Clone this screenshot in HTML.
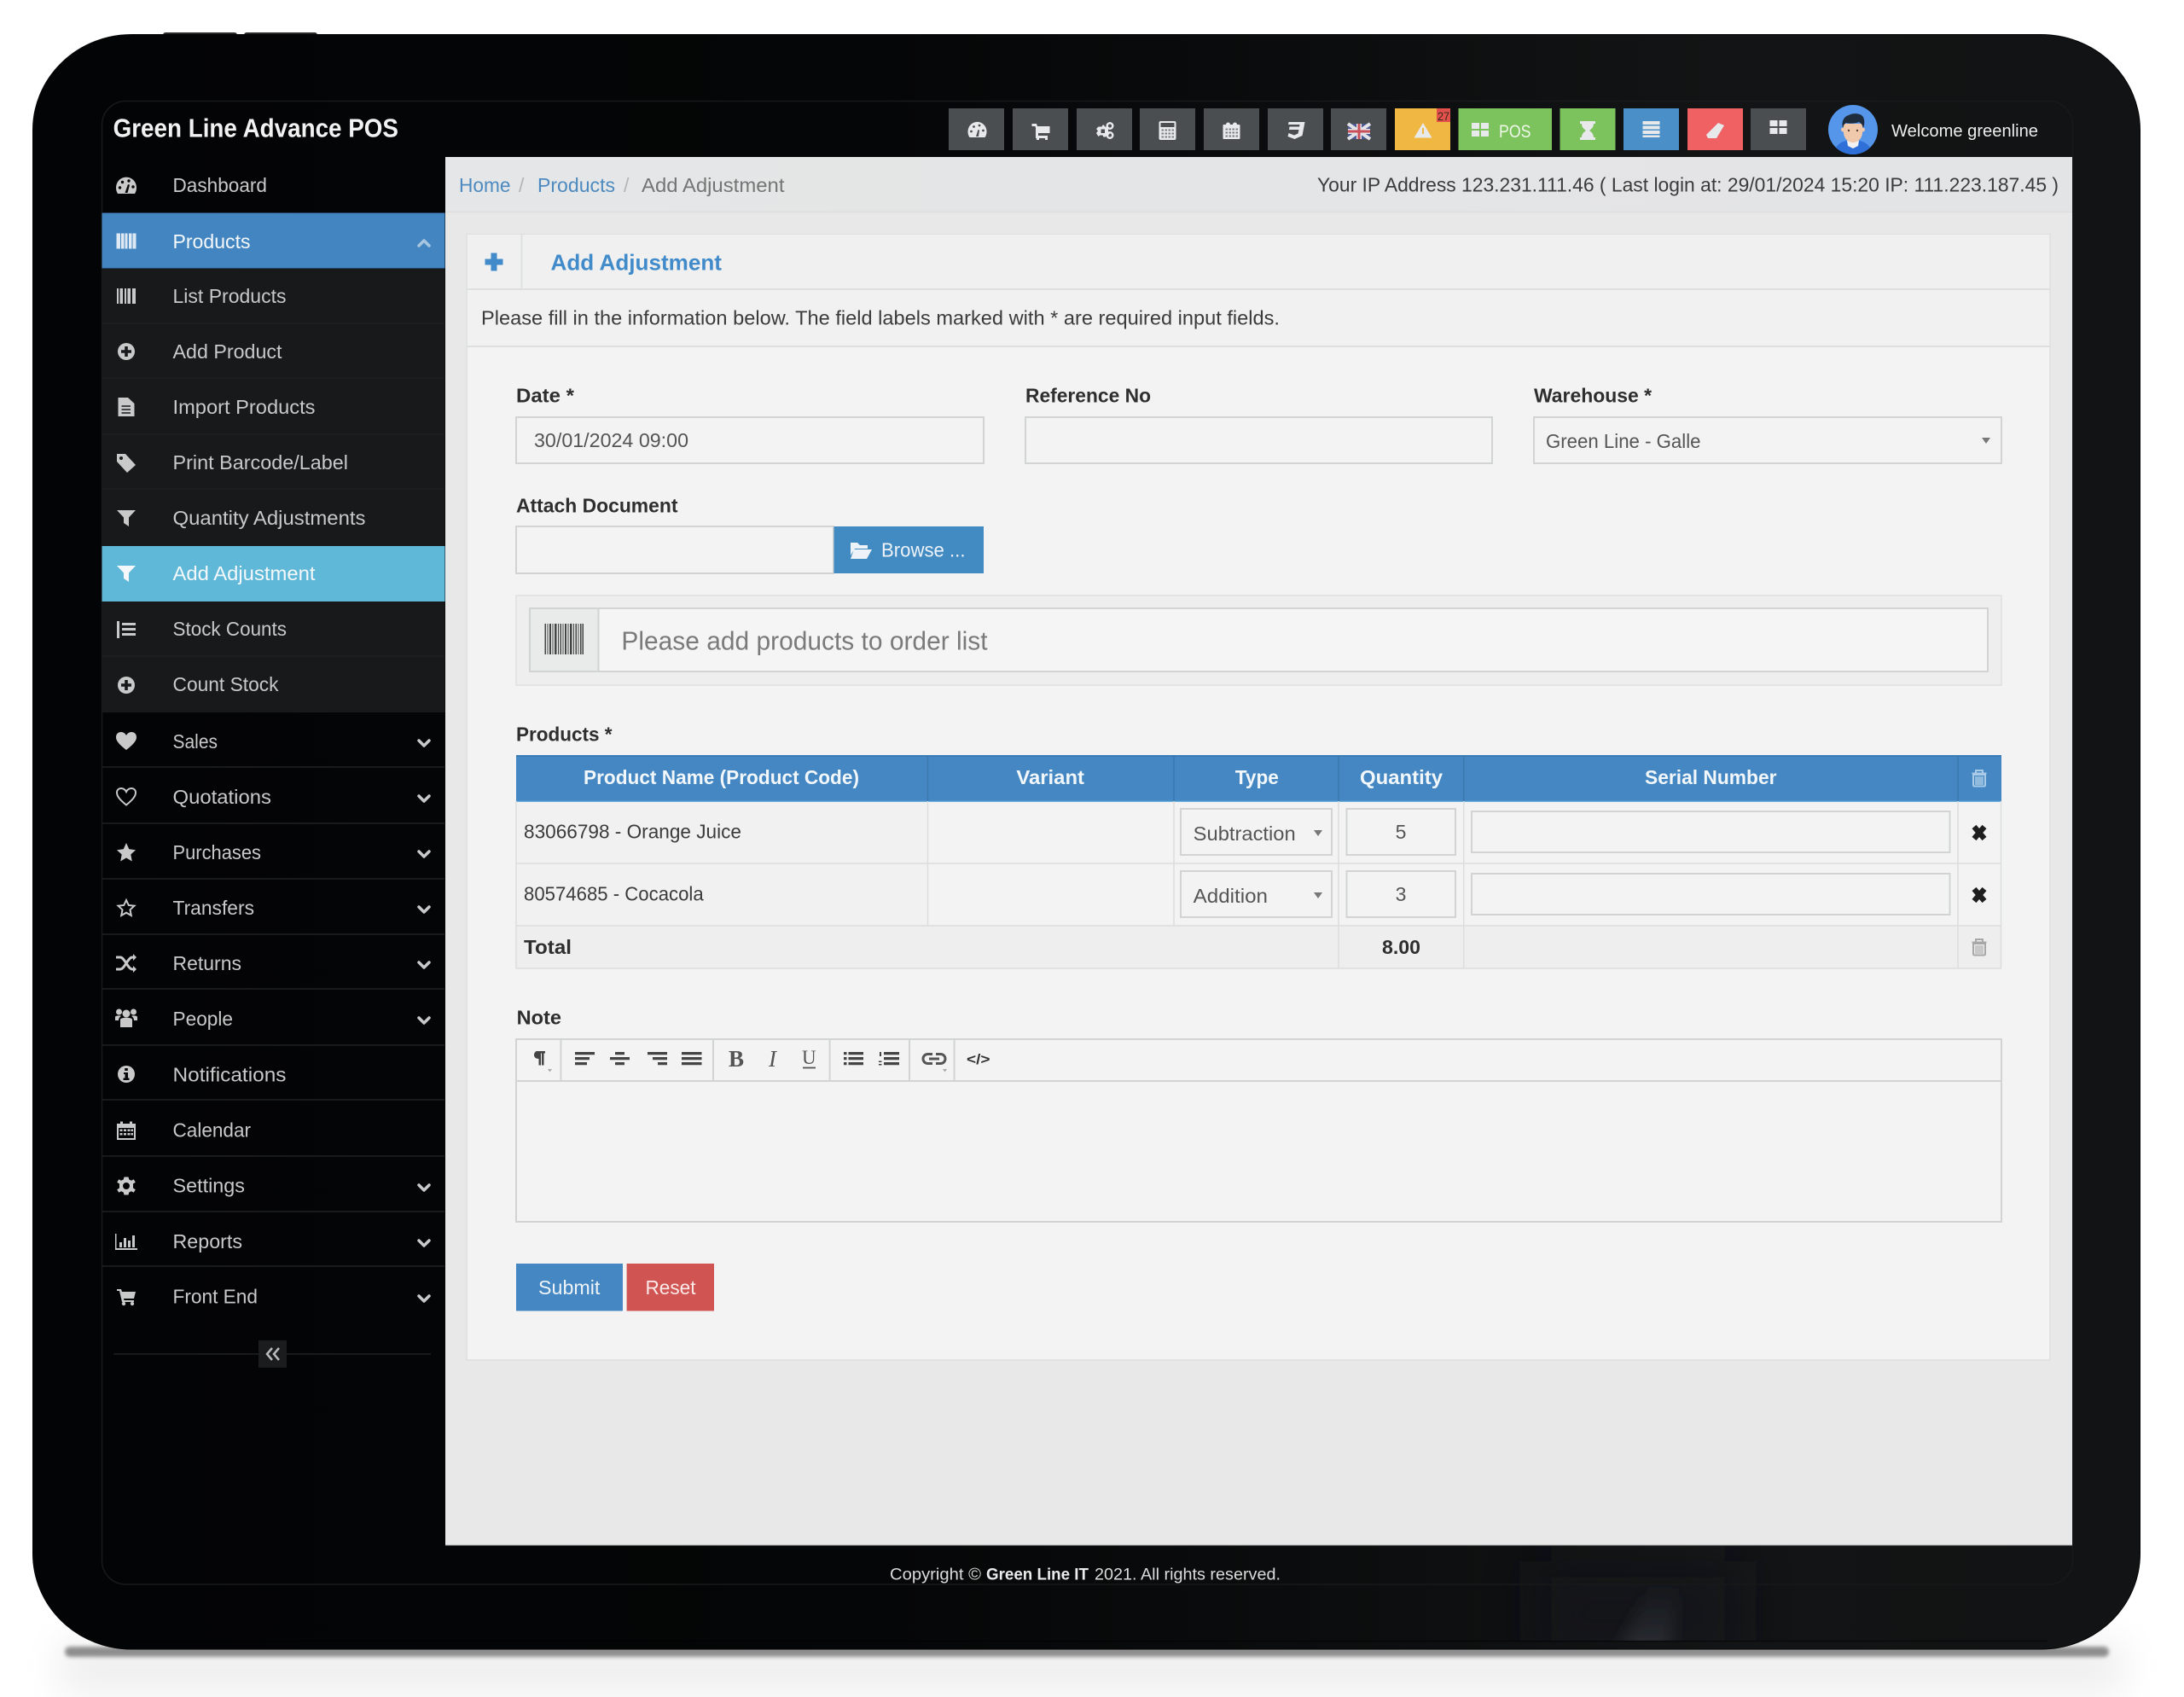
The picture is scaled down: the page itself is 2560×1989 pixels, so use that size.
<!DOCTYPE html>
<html lang="en"><head><meta charset="utf-8"><title>Add Adjustment</title>
<style>
html,body{margin:0;padding:0;background:#fff}
svg{display:block}
text{font-family:"Liberation Sans",sans-serif}
.s{font-size:23px;fill:#c9c9c9}
.w{fill:#f4f8fb}
.l{font-size:23px;font-weight:bold;fill:#2e2e2e}
.t{font-size:23px;fill:#3b3b3b}
.h{font-size:23px;font-weight:bold;fill:#f2f7fb;text-anchor:start}
.ic{fill:#c9c9c9}
.b{fill:none;stroke:#d2d3d3;stroke-width:2}
.e{fill:#444}
</style></head><body>
<svg xmlns="http://www.w3.org/2000/svg" width="2560" height="1989" viewBox="0 0 2560 1989">
<defs>
<linearGradient id="dev" x1="0" x2="1" y1="0" y2="0"><stop offset="0" stop-color="#030405"/><stop offset=".4" stop-color="#050607"/><stop offset=".62" stop-color="#0b0d0e"/><stop offset=".8" stop-color="#121415"/><stop offset="1" stop-color="#111314"/></linearGradient>
<linearGradient id="bc" x1="0" x2="1" y1="0" y2="0"><stop offset="0" stop-color="#e5e6e7"/><stop offset="1" stop-color="#e3e4e5"/></linearGradient>
<linearGradient id="sh" x1="0" x2="0" y1="0" y2="1"><stop offset="0" stop-color="#2e3238" stop-opacity="0"/><stop offset="1" stop-color="#2e3238"/></linearGradient>
<filter id="bl" x="-20%" y="-100%" width="140%" height="300%"><feGaussianBlur stdDeviation="2.500"/></filter>
<filter id="bf" x="-10%" y="-100%" width="120%" height="300%"><feGaussianBlur stdDeviation="22"/></filter>
<filter id="bs" x="-100%" y="-100%" width="300%" height="300%"><feGaussianBlur stdDeviation="9"/></filter>
<filter id="bw" x="-50%" y="-100%" width="200%" height="300%"><feGaussianBlur stdDeviation="28"/></filter>
<clipPath id="cp"><rect x="1700" y="1812" width="500" height="111"/></clipPath>
</defs>
<rect width="2560" height="1989" fill="#fff"/>
<rect x="70" y="1925" width="2420" height="60" fill="#eeeeee" filter="url(#bf)"/>
<rect x="76" y="1930" width="2396" height="12" rx="6" fill="#8e8e8e" filter="url(#bl)"/>
<rect x="191" y="38" width="87" height="6" rx="3" fill="#2a2a2a"/><rect x="286" y="38" width="86" height="6" rx="3" fill="#2a2a2a"/>
<rect x="38.500" y="40.500" width="2470" height="1892.500" rx="116" ry="112" fill="url(#dev)" stroke="#050505"/>
<g clip-path="url(#cp)">
<rect x="1800" y="1830" width="240" height="120" fill="#16191b" filter="url(#bw)" opacity=".7"/>
<path d="M1890 1950H1955L1970 1855H1935Z" fill="url(#sh)" filter="url(#bs)"/>
</g>
<path d="M150 1923.500H2400" stroke="#000" stroke-opacity=".5" stroke-width="1.500"/>
<rect x="119.500" y="118.500" width="2310" height="1738.500" rx="28" fill="none" stroke="#18191a" stroke-width="1.500"/>

<!-- header -->
<text x="132.600" y="160.500" font-size="31" font-weight="bold" fill="#f2f2f2" textLength="334.400" lengthAdjust="spacingAndGlyphs">Green Line Advance POS</text>
<g fill="#4a4e51"><rect x="1112" y="127" width="65" height="49"/><rect x="1187" y="127" width="65" height="49"/><rect x="1262" y="127" width="65" height="49"/><rect x="1336" y="127" width="65" height="49"/><rect x="1411" y="127" width="65" height="49"/><rect x="1486" y="127" width="65" height="49"/><rect x="1560" y="127" width="65" height="49"/><rect x="2052" y="127" width="65" height="49"/></g>
<rect x="1635" y="127" width="65" height="49" fill="#f0b842"/><rect x="1684" y="127" width="16" height="16" fill="#e2504c"/>
<text x="1685" y="141" font-size="14" fill="#3a2a1a" textLength="14" lengthAdjust="spacingAndGlyphs">27</text>
<rect x="1709.500" y="127" width="109.500" height="49" fill="#7cc35d"/><rect x="1828.500" y="127" width="65" height="49" fill="#7cc35d"/>
<rect x="1903" y="127" width="65" height="49" fill="#4a8fc8"/><rect x="1978" y="127" width="65" height="49" fill="#f06164"/>
<g fill="#e8e9ea">
<g transform="translate(1145.500,153)"><path d="M-9 8A11 11.500 0 1 1 9 8Z"/><g fill="#4a4e51"><circle cx="-7" cy="1" r="1.400"/><circle cx="-4" cy="-4.500" r="1.400"/><circle cx="2.500" cy="-6" r="1.400"/><circle cx="7" cy="0" r="1.400"/><path d="M-1.500 7L1-1l1.500.5L1.500 7Z"/></g></g>
<g transform="translate(1220,153)"><path d="M-10.500-8H-5L-4-5H10.500V3H-3V6H8V9H-6V-3L-6.500-5H-10.500Z"/><path d="M-5 9H-2V11H-5ZM5 9H8V11H5Z"/></g>
<g transform="translate(1295,153)"><path fill-rule="evenodd" d="M-8.500-5.500h4l1-2h1.500l1 2h2.500L3-3.500V0L5 1.500 3.500 4.500H1L0 6.500H-2.500L-3.500 4.500H-6.500L-8.500 6-11 2-9-.5-11-3ZM-5.500-2.500V2H-1V-2.500Z" transform="translate(1,1)"/><path fill-rule="evenodd" d="M6-10A4.500 4.500 0 1 0 6-1 4.500 4.500 0 1 0 6-10ZM6-7.500A2 2 0 1 1 6-3.500 2 2 0 1 1 6-7.500ZM6 1A4.500 4.500 0 1 0 6 10 4.500 4.500 0 1 0 6 1ZM6 3.500A2 2 0 1 1 6 7.500 2 2 0 1 1 6 3.500Z"/></g>
<g transform="translate(1368.500,153)"><path fill-rule="evenodd" d="M-8-11H8Q10-11 10-9V9Q10 11 8 11H-8Q-10 11-10 9V-9Q-10-11-8-11ZM-8-9V-4H8V-9Z"/><path d="M-7-1.500h2.500v2H-7ZM-3-1.500h2.500v2H-3ZM1-1.500h2.500v2H1ZM5-1.500h2.500v2H5ZM-7 2.500h2.500v2H-7ZM-3 2.500h2.500v2H-3ZM1 2.500h2.500v2H1ZM5 2.500h2.500v2H5ZM-7 6.500h2.500v2H-7ZM-3 6.500h2.500v2H-3ZM1 6.500h2.500v2H1ZM5 6.500h2.500v2H5Z" fill="#7b7e80"/></g>
<g transform="translate(1443.500,153)"><path d="M-9-7h2.500a2.500 2.500 0 0 1 5 0h3a2.500 2.500 0 0 1 5 0H9Q10-7 10-6V9Q10 10 9 10H-9Q-10 10-10 9V-6Q-10-7-9-7Z"/><path d="M-7-2.500h2.500v2H-7ZM-3-2.500h2.500v2H-3ZM1-2.500h2.500v2H1ZM5-2.500h2.500v2H5ZM-7 1.500h2.500v2H-7ZM-3 1.500h2.500v2H-3ZM1 1.500h2.500v2H1ZM5 1.500h2.500v2H5ZM-7 5.500h2.500v2H-7ZM-3 5.500h2.500v2H-3ZM1 5.500h2.500v2H1ZM5 5.500h2.500v2H5Z" fill="#7b7e80"/></g>
<g transform="translate(1518.500,153)"><path d="M-8-10H11L8 6-1 10-9 7-8 3-1.500 5.500 3 3.500 4-1H-7.500L-7-4.500H4.500L5-7H-8.500Z"/></g>
<g transform="translate(1668,153)"><path fill-rule="evenodd" d="M0-9 10.500 8.500H-10.500ZM-1-3V4H1V-3Z"/></g>
<g transform="translate(1735,152)"><path d="M-10-8h9V-1h-9ZM1-8h9V-1H1ZM-10 1h9V8h-9ZM1 1h9V8H1Z"/></g>
<g transform="translate(1861,153)"><path d="M-9-11H9V-8H7C7-3 3-1 2 0 3 1 7 3 7 8H9V11H-9V8H-7C-7 3-3 1-2 0-3-1-7-3-7-8H-9Z"/></g>
<g transform="translate(1935.500,151)"><path d="M-10-9H10V-5H-10ZM-10-3.500H10V.5H-10ZM-10 2H10V6H-10ZM-10 7.500H10V10H-10Z"/></g>
<g transform="translate(2010,153)"><path d="M4-9 11-6 2 9-8 9-10 5Z"/></g>
<g transform="translate(2084.500,149)"><path d="M-10-8h9V-1h-9ZM1-8h9V-1H1ZM-10 1h9V8h-9ZM1 1h9V8H1Z"/></g>
</g>
<g><rect x="1580" y="145" width="26" height="18" fill="#4a5a92"/><path d="M1580 145L1606 163M1606 145L1580 163" stroke="#e4e4e8" stroke-width="4"/><path d="M1593 145V163M1580 154H1606" stroke="#e4e4e8" stroke-width="6"/><path d="M1593 145V163M1580 154H1606" stroke="#c9505a" stroke-width="3"/></g>
<text x="1757" y="161" font-size="21" fill="#eef6e8" textLength="37.500" lengthAdjust="spacingAndGlyphs">POS</text>
<circle cx="2172" cy="152" r="29" fill="#5596ea"/>
<path d="M2152 173c3-5 9-8 14-8h12c5 0 11 3 14 8a29 29 0 0 1-40 0Z" fill="#2f6fd8"/>
<path d="M2165 165h14l-1 6-6 3-6-3Z" fill="#f2f2f2"/>
<circle cx="2160.500" cy="152" r="2.500" fill="#f0c9ad"/><circle cx="2183.500" cy="152" r="2.500" fill="#f0c9ad"/>
<path d="M2161 145h22v10c0 7-5 12-11 12s-11-5-11-12Z" fill="#f0c9ad"/>
<circle cx="2167" cy="153" r="1.200" fill="#5a4030"/><circle cx="2177" cy="153" r="1.200" fill="#5a4030"/>
<path d="M2160 150c-2-8 2-14 7-15 5-3 12-2 15 0 4 3 4 10 2 15-1-4-3-6-5-7-5 2-11 2-15 1-2 1-3 3-4 6Z" fill="#1f2c3e"/>
<text x="2217" y="160" font-size="20.500" fill="#ececec" textLength="172" lengthAdjust="spacingAndGlyphs">Welcome greenline</text>

<!-- sidebar -->
<rect x="119.500" y="315" width="402" height="520" fill="#17191a"/>
<rect x="119.500" y="249.500" width="402" height="65" fill="#4285c0"/>
<rect x="119.500" y="640" width="402" height="65" fill="#5fb8d8"/>
<g stroke="#1f2122" stroke-width="1.500"><path d="M120 379H521M120 443H521M120 509H521M120 573H521M120 769H521M120 899H521M120 965H521M120 1030H521M120 1095H521M120 1159H521M120 1225H521M120 1289H521M120 1355H521M120 1420H521M120 1484H521M133 1587H505"/></g>
<rect x="303" y="1571" width="33" height="32" fill="#1a1c1d"/>
<path d="M319 1580l-6 7 6 7M327 1580l-6 7 6 7" fill="none" stroke="#bbb" stroke-width="2.500"/>
<text class="s" x="202.500" y="225" textLength="110.500" lengthAdjust="spacingAndGlyphs">Dashboard</text>
<text class="s w" x="202.500" y="291" textLength="91" lengthAdjust="spacingAndGlyphs">Products</text>
<text class="s" x="202.500" y="355" textLength="133" lengthAdjust="spacingAndGlyphs">List Products</text>
<text class="s" x="202.500" y="420" textLength="128" lengthAdjust="spacingAndGlyphs">Add Product</text>
<text class="s" x="202.500" y="485" textLength="167" lengthAdjust="spacingAndGlyphs">Import Products</text>
<text class="s" x="202.500" y="550" textLength="205.500" lengthAdjust="spacingAndGlyphs">Print Barcode/Label</text>
<text class="s" x="202.500" y="615" textLength="226" lengthAdjust="spacingAndGlyphs">Quantity Adjustments</text>
<text class="s w" x="202.500" y="680" textLength="167" lengthAdjust="spacingAndGlyphs">Add Adjustment</text>
<text class="s" x="202.500" y="745" textLength="133.500" lengthAdjust="spacingAndGlyphs">Stock Counts</text>
<text class="s" x="202.500" y="810" textLength="124" lengthAdjust="spacingAndGlyphs">Count Stock</text>
<text class="s" x="202.500" y="877" textLength="52.500" lengthAdjust="spacingAndGlyphs">Sales</text>
<text class="s" x="202.500" y="942" textLength="115.500" lengthAdjust="spacingAndGlyphs">Quotations</text>
<text class="s" x="202.500" y="1007" textLength="103.500" lengthAdjust="spacingAndGlyphs">Purchases</text>
<text class="s" x="202.500" y="1072" textLength="95.500" lengthAdjust="spacingAndGlyphs">Transfers</text>
<text class="s" x="202.500" y="1137" textLength="80.500" lengthAdjust="spacingAndGlyphs">Returns</text>
<text class="s" x="202.500" y="1202" textLength="70.500" lengthAdjust="spacingAndGlyphs">People</text>
<text class="s" x="202.500" y="1267.500" textLength="133" lengthAdjust="spacingAndGlyphs">Notifications</text>
<text class="s" x="202.500" y="1332.500" textLength="91.500" lengthAdjust="spacingAndGlyphs">Calendar</text>
<text class="s" x="202.500" y="1397.500" textLength="84.500" lengthAdjust="spacingAndGlyphs">Settings</text>
<text class="s" x="202.500" y="1463" textLength="81.500" lengthAdjust="spacingAndGlyphs">Reports</text>
<text class="s" x="202.500" y="1527.500" textLength="99.500" lengthAdjust="spacingAndGlyphs">Front End</text>
<g class="ic">
<g transform="translate(148,218)"><path d="M-10 9A12 12.500 0 1 1 10 9Z"/><g fill="#050607"><circle cx="-7.500" cy="2" r="1.700"/><circle cx="-4.500" cy="-4.500" r="1.700"/><circle cx="3" cy="-6" r="1.700"/><circle cx="8" cy="1" r="1.700"/><path d="M-1.500 8L2-2l2 .7L1.500 8Z"/></g></g>
<g transform="translate(148,282.500)" fill="#dfe9f3"><path d="M-11.500-9H-7V9H-11.500ZM-6-9H-2.500V9H-6ZM-1.500-9H1.500V9H-1.500ZM3-9H6.500V9H3ZM7.500-9H11.500V9H7.500Z"/></g>
<g transform="translate(148,347)"><path d="M-11-9h2V9h-2ZM-7.500-9H-4V9H-7.500ZM-2-9H0V9H-2ZM1.500-9H5V9H1.500ZM7-9H11V9H7Z"/></g>
<g transform="translate(148,412)"><circle r="10"/><path d="M-1.800-6h3.600v4.200H6v3.600H1.800V6h-3.600V1.800H-6v-3.600h4.200Z" fill="#17191a"/></g>
<g transform="translate(148,477)"><path d="M-9.500-11H2L9.500-4V11H-9.500Z"/><path d="M-5.500-1H5M-5.500 3H5M-5.500 7H5" stroke="#17191a" stroke-width="1.500"/></g>
<g transform="translate(148,543)"><path d="M-11-11H-1L11 2 1 11-11-2Z"/><circle cx="-6" cy="-6" r="2" fill="#17191a"/></g>
<g transform="translate(148,607)"><path d="M-11-9H11L3-.5V10L-3 6V-.5Z"/></g>
<g transform="translate(148,672)" fill="#f4f8fb"><path d="M-11-9H11L3-.5V10L-3 6V-.5Z"/></g>
<g transform="translate(148,738)"><path d="M-5-8H11V-5H-5ZM-5-2H11V1H-5ZM-5 4H11V7H-5ZM-11-10h3V10h-3Z"/></g>
<g transform="translate(148,803)"><circle r="10"/><path d="M-1.800-6h3.600v4.200H6v3.600H1.800V6h-3.600V1.800H-6v-3.600h4.200Z" fill="#17191a"/></g>
<g transform="translate(148,869)"><path d="M0 10C-9 3-12-1-12-5-12-12-3-13 0-7 3-13 12-12 12-5 12-1 9 3 0 10Z"/></g>
<g transform="translate(148,934)"><path d="M0 9.500C-8 3-11-1-11-5-11-11-3-12 0-6 3-12 11-11 11-5 11-1 8 3 0 9.500Z" fill="none" stroke="#c9c9c9" stroke-width="2"/></g>
<g transform="translate(148,999)"><path d="M0-11 3.300-3.700 11-2.800 5.300 2.500 6.800 10.500 0 6.500-6.800 10.500-5.300 2.500-11-2.800-3.300-3.700Z"/></g>
<g transform="translate(148,1064)"><path d="M0-9 2.800-3 9.500-2.300 4.500 2.300 5.800 9 0 5.700-5.800 9-4.500 2.300-9.500-2.300-2.800-3Z" fill="none" stroke="#c9c9c9" stroke-width="2"/></g>
<g transform="translate(148,1129)"><path d="M-12-7H-7C-2-7 2 7 7 7H9M-12 7H-7C-2 7 2-7 7-7H9" fill="none" stroke="#c9c9c9" stroke-width="3"/><path d="M8-11 12-7 8-3ZM8 3 12 7 8 11Z"/></g>
<g transform="translate(148,1193)"><circle cy="-5" r="4.500"/><circle cx="-8.500" cy="-7" r="3.500"/><circle cx="8.500" cy="-7" r="3.500"/><path d="M-7 11V2C-7-1 7-1 7 2V11ZM-13 3V-1C-13-3-6-3-6-2-8-1-9 1-9 3ZM13 3V-1C13-3 6-3 6-2 8-1 9 1 9 3Z"/></g>
<g transform="translate(148,1259)"><circle r="10"/><path d="M-1.800-7h3.600v3h-3.600ZM-3-2H2V4.500H3.500V7H-3.500V4.500H-1.500V0H-3Z" fill="#050607"/></g>
<g transform="translate(148,1325)"><path fill-rule="evenodd" d="M-11-8h4v-2.500h3V-8H4v-2.500h3V-8h4V11H-11ZM-9-3V9H9V-3Z"/><path d="M-7.500-1.500h3v2.500h-3ZM-3-1.500h3v2.500h-3ZM1.500-1.500h3v2.500h-3ZM5.500-1.500h2.500v2.500H5.500ZM-7.500 3h3v2.500h-3ZM-3 3h3v2.500h-3ZM1.500 3h3v2.500h-3ZM5.500 3h2.500v2.500H5.500Z"/></g>
<g transform="translate(148,1390)"><path fill-rule="evenodd" d="M-2.500-10.500h5L3.300-7.500 6-6.200 8.700-7.800 10.800-4.300 8-2.500V2.500L10.800 4.300 8.700 7.800 6 6.200 3.300 7.500 2.500 10.500h-5L-3.300 7.500-6 6.200-8.700 7.800-10.800 4.300-8 2.500V-2.500L-10.800-4.300-8.700-7.800-6-6.200-3.300-7.500ZM0-4A4 4 0 1 0 0 4 4 4 0 1 0 0-4Z"/></g>
<g transform="translate(148,1455)"><path d="M-13-9H-11.500V8H13V10H-13ZM-8 1H-5V7H-8ZM-3-4H0V7H-3ZM2-1H5V7H2ZM7-7H10V7H7Z"/></g>
<g transform="translate(148,1519)"><path d="M-11-8H-6L-5-5H11L9 3H-3L-2.500 5H9V7H-5L-8-6H-11Z"/><circle cx="-3" cy="9" r="2.200"/><circle cx="7" cy="9" r="2.200"/></g>
</g>
<g fill="none" stroke="#c9c9c9" stroke-width="3.500" stroke-linecap="round" stroke-linejoin="round"><path d="M491 868l6 6 6-6M491 933l6 6 6-6M491 998l6 6 6-6M491 1063l6 6 6-6M491 1128l6 6 6-6M491 1193l6 6 6-6M491 1389l6 6 6-6M491 1454l6 6 6-6M491 1519l6 6 6-6"/><path d="M491 288l6-6 6 6" stroke="#a9c6e0"/></g>

<!-- main -->
<rect x="522" y="184" width="1907" height="1627" fill="#e8e8e8"/>
<rect x="522" y="184" width="1907" height="64" fill="url(#bc)"/>
<path d="M522 248.500H2429" stroke="#dcdddd" stroke-width="1.500"/>
<path d="M522 1811H2429" stroke="#aaa"/>
<text x="538" y="225" class="t" style="fill:#4d8ac0" textLength="60.500" lengthAdjust="spacingAndGlyphs">Home</text>
<text x="608" y="225" class="t" style="fill:#b5b5b5">/</text>
<text x="630" y="225" class="t" style="fill:#4d8ac0" textLength="91" lengthAdjust="spacingAndGlyphs">Products</text>
<text x="731" y="225" class="t" style="fill:#b5b5b5">/</text>
<text x="752" y="225" class="t" style="fill:#757575" textLength="167.500" lengthAdjust="spacingAndGlyphs">Add Adjustment</text>
<text x="1544" y="224.500" class="t" textLength="869" lengthAdjust="spacingAndGlyphs">Your IP Address 123.231.111.46 ( Last login at: 29/01/2024 15:20 IP: 111.223.187.45 )</text>

<!-- card -->
<rect x="547" y="274.500" width="1856" height="1319.500" fill="#f3f3f3" stroke="#dedfdf" stroke-width="1.500"/>
<rect x="548" y="275" width="1854" height="64" fill="#f0f0f0"/>
<rect x="548" y="339" width="1854" height="67" fill="#f1f1f1"/>
<path d="M547 339H2403M547 406H2403M611.500 275V339" stroke="#dedfdf" stroke-width="2"/>
<path d="M575.500 296.500h7v7h7v7h-7v7h-7v-7h-7v-7h7Z" fill="#428bca"/>
<text x="645.500" y="316.500" font-size="26" font-weight="bold" fill="#428bca" textLength="200.500" lengthAdjust="spacingAndGlyphs">Add Adjustment</text>
<text x="564" y="380.500" class="t" textLength="936" lengthAdjust="spacingAndGlyphs">Please fill in the information below. The field labels marked with * are required input fields.</text>

<text class="l" x="605" y="471.500" textLength="68" lengthAdjust="spacingAndGlyphs">Date *</text>
<rect x="605" y="489" width="548" height="54" class="b"/>
<text class="t" x="626" y="524" style="fill:#555" textLength="181" lengthAdjust="spacingAndGlyphs">30/01/2024 09:00</text>
<text class="l" x="1202" y="471.500" textLength="147" lengthAdjust="spacingAndGlyphs">Reference No</text>
<rect x="1202" y="489" width="547" height="54" class="b"/>
<text class="l" x="1798" y="471.500" textLength="138" lengthAdjust="spacingAndGlyphs">Warehouse *</text>
<rect x="1798" y="489" width="548" height="54" class="b"/>
<text class="t" x="1812" y="525" style="fill:#555" textLength="181.500" lengthAdjust="spacingAndGlyphs">Green Line - Galle</text>
<path d="M2323 513h10l-5 7Z" fill="#777"/>

<text class="l" x="605" y="600.500" textLength="189.500" lengthAdjust="spacingAndGlyphs">Attach Document</text>
<rect x="605" y="617" width="372" height="55" class="b"/>
<rect x="977.500" y="617" width="175.500" height="55" fill="#428ac2"/>
<path d="M997 651V636h8l3 3h9v4h-15l-5 8ZM1001 644H1022L1016 655H997Z" fill="#edf3f8"/>
<text x="1033" y="652.500" font-size="23" fill="#edf3f8" textLength="98.500" lengthAdjust="spacingAndGlyphs">Browse ...</text>

<rect x="605" y="698" width="1741" height="105" fill="#eeeeee" stroke="#dfe0e0" stroke-width="1.500"/>
<rect x="621" y="713" width="1709" height="74" fill="#f5f5f5" stroke="#d2d3d3" stroke-width="2"/>
<rect x="622" y="714" width="79.500" height="72" fill="#e9eaea"/><path d="M701.500 714V786" stroke="#d2d3d3" stroke-width="2"/>
<path d="M638.500 731h1.500v36h-1.500ZM641.500 731h1v36h-1ZM644 731h2v36h-2ZM647.500 731h1v36h-1ZM650 731h2.500v36H650ZM654 731h1v36h-1ZM656.500 731h1.500v36h-1.500ZM659.500 731h1v36h-1ZM662 731h2v36h-2ZM665.500 731h1v36h-1ZM668 731h2.500v36H668ZM672 731h1v36h-1ZM674.500 731h1.500v36h-1.500ZM677.500 731h1v36h-1ZM680 731h1.500v36H680ZM682.500 731h1.500v36h-1.500Z" fill="#444"/>
<text x="728.400" y="761.500" font-size="31" fill="#7a7a7a" textLength="429.200" lengthAdjust="spacingAndGlyphs">Please add products to order list</text>

<!-- table -->
<text class="l" x="605" y="868.500" textLength="112.500" lengthAdjust="spacingAndGlyphs">Products *</text>
<rect x="605" y="939" width="1741" height="196" fill="#f3f3f3"/>
<rect x="606" y="1085" width="1739" height="50" fill="#eeeeee"/>
<rect x="606" y="940" width="481" height="145" fill="#f1f1f1"/>
<rect x="605" y="886" width="1741" height="53" fill="#4587c2"/>
<path d="M605 886H2346" stroke="#3a7cb8" stroke-width="2"/>
<path d="M605 939H2346" stroke="#4a97d2" stroke-width="1.500"/>
<path d="M1087.500 886V939M1376 886V939M1569 886V939M1715.700 886V939M2295 886V939" stroke="#3a79b0" stroke-width="1.500"/>
<path d="M1087.500 939V1085M1376 939V1085M1569 939V1135M1715.700 939V1135M2295 939V1135M605 939V1135M2345.500 939V1135M605 1012H2346M605 1085H2346M605 1135H2346" stroke="#dcdddd" stroke-width="1.500"/>
<text class="h" x="684" y="919" textLength="323" lengthAdjust="spacingAndGlyphs">Product Name (Product Code)</text>
<text class="h" x="1191.400" y="919" textLength="79.600" lengthAdjust="spacingAndGlyphs">Variant</text>
<text class="h" x="1447.800" y="919" textLength="51" lengthAdjust="spacingAndGlyphs">Type</text>
<text class="h" x="1594" y="919" textLength="97" lengthAdjust="spacingAndGlyphs">Quantity</text>
<text class="h" x="1928" y="919" textLength="154.500" lengthAdjust="spacingAndGlyphs">Serial Number</text>
<g transform="translate(2320,912)"><path d="M-8.500-5.500H8.500M-4-6V-9H4V-6M-7-4V8Q-7 9.500-5.500 9.500H5.500Q7 9.500 7 8V-4Z" fill="none" stroke="#a9cbe8" stroke-width="2"/><rect x="-5" y="-2" width="10" height="10" fill="#8fbade"/></g>
<text class="t" x="614" y="982.500" textLength="255" lengthAdjust="spacingAndGlyphs">83066798 - Orange Juice</text>
<text class="t" x="614" y="1055.500" textLength="210.700" lengthAdjust="spacingAndGlyphs">80574685 - Cocacola</text>
<text class="l" x="614" y="1118" textLength="56" lengthAdjust="spacingAndGlyphs">Total</text>
<text class="l" x="1620" y="1118" textLength="45" lengthAdjust="spacingAndGlyphs">8.00</text>
<rect x="1384" y="948" width="177" height="54" class="b"/><rect x="1384" y="1021" width="177" height="54" class="b"/>
<text class="t" x="1398.700" y="985" style="fill:#555" textLength="120" lengthAdjust="spacingAndGlyphs">Subtraction</text>
<text class="t" x="1398.700" y="1058" style="fill:#555" textLength="87.300" lengthAdjust="spacingAndGlyphs">Addition</text>
<path d="M1540 973h10l-5 7ZM1540 1046h10l-5 7Z" fill="#777"/>
<rect x="1578.500" y="948" width="127.500" height="54" class="b"/><rect x="1578.500" y="1021" width="127.500" height="54" class="b"/>
<text class="t" x="1642" y="983" text-anchor="middle" style="fill:#555">5</text>
<text class="t" x="1642" y="1056" text-anchor="middle" style="fill:#555">3</text>
<rect x="1725" y="951" width="560.500" height="48" class="b"/><rect x="1725" y="1024" width="560.500" height="48" class="b"/>
<path d="M2314 969l12 14M2326 969l-12 14M2314 1042l12 14M2326 1042l-12 14" stroke="#1e1e1e" stroke-width="6.500" fill="none"/>
<g transform="translate(2320,1110)"><path d="M-8.500-5.500H8.500M-4-6V-9H4V-6M-7-4V8Q-7 9.500-5.500 9.500H5.500Q7 9.500 7 8V-4Z" fill="none" stroke="#a8a8a8" stroke-width="2"/><rect x="-5" y="-2" width="10" height="10" fill="#c8c8c8"/></g>

<!-- editor -->
<text class="l" x="605.600" y="1200.500" textLength="52.400" lengthAdjust="spacingAndGlyphs">Note</text>
<rect x="605" y="1218" width="1741" height="214" class="b"/>
<path d="M605 1267H2346M657.400 1218V1267M836 1218V1267M972.600 1218V1267M1066 1218V1267M1118.600 1218V1267" stroke="#d2d3d3" stroke-width="2"/>
<g class="e">
<path d="M629 1232h10v2.500h-1.500v14h-2.500v-14h-1v14h-2.500v-7.500c-3.500 0-5.500-2-5.500-4.500s2-4.500 3-4.500Z"/>
<path d="M674 1233h23v3.300h-23ZM674 1239h17v3.300h-17ZM674 1245h14v3.300h-14Z"/>
<path d="M715 1239h23v3.300h-23ZM721 1233h11v3.300h-11ZM721 1245h11v3.300h-11Z"/>
<path d="M759 1233h23v3.300h-23ZM765 1239h17v3.300h-17ZM771 1245h11v3.300h-11Z"/>
<path d="M799 1233h23.500v3.300h-23.500ZM799 1239h23.500v3.300h-23.500ZM799 1245h23.500v3.300h-23.500Z"/>
<path d="M989 1233h3.500v3.300h-3.500ZM989 1239h3.500v3.300h-3.500ZM989 1245h3.500v3.300h-3.500ZM994.500 1233h17.500v3.300h-17.500ZM994.500 1239h17.500v3.300h-17.500ZM994.500 1245h17.500v3.300h-17.500Z"/>
<path d="M1031 1233h2v5h-2ZM1030 1243.500h3.500v1.500H1030ZM1030 1247h3.500v1.500H1030ZM1036 1233h18v3.300h-18ZM1036 1239h18v3.300h-18ZM1036 1245h18v3.300h-18Z"/>
<path d="M642 1253h5l-2.500 3.500ZM1105 1253h5l-2.500 3.500Z" fill="#aaa"/>
</g>
<text x="854" y="1250" font-size="27" font-weight="bold" fill="#555" style="font-family:'Liberation Serif',serif">B</text>
<text x="901" y="1250" font-size="27" font-style="italic" fill="#555" style="font-family:'Liberation Serif',serif">I</text>
<text x="940" y="1247" font-size="23" fill="#555" style="font-family:'Liberation Serif',serif">U</text><path d="M941 1251.500h15" stroke="#555" stroke-width="1.800"/>
<path d="M1093 1235.500h-5.500a5.500 5.500 0 0 0 0 11h5.500M1097 1235.500h5.500a5.500 5.500 0 0 1 0 11h-5.500M1089 1241h12" fill="none" stroke="#555" stroke-width="3"/>
<text x="1133" y="1247" font-size="17" font-weight="bold" fill="#333" textLength="27.500" lengthAdjust="spacingAndGlyphs">&lt;/&gt;</text>

<rect x="605" y="1481" width="125" height="55.500" fill="#4587c2"/>
<rect x="734.600" y="1481" width="102.400" height="55.500" fill="#d05552"/>
<text x="631" y="1517" font-size="23" fill="#eef4f9" textLength="72.400" lengthAdjust="spacingAndGlyphs">Submit</text>
<text x="756.500" y="1517" font-size="23" fill="#f9e9e8" textLength="59" lengthAdjust="spacingAndGlyphs">Reset</text>

<!-- footer -->
<text x="1043" y="1851.500" font-size="19.500" fill="#dcdcdc" textLength="107" lengthAdjust="spacingAndGlyphs">Copyright ©</text>
<text x="1156" y="1851.500" font-size="19.500" font-weight="bold" fill="#ececec" textLength="120" lengthAdjust="spacingAndGlyphs">Green Line IT</text>
<text x="1283" y="1851.500" font-size="19.500" fill="#dcdcdc" textLength="218" lengthAdjust="spacingAndGlyphs">2021. All rights reserved.</text>
</svg>
</body></html>
